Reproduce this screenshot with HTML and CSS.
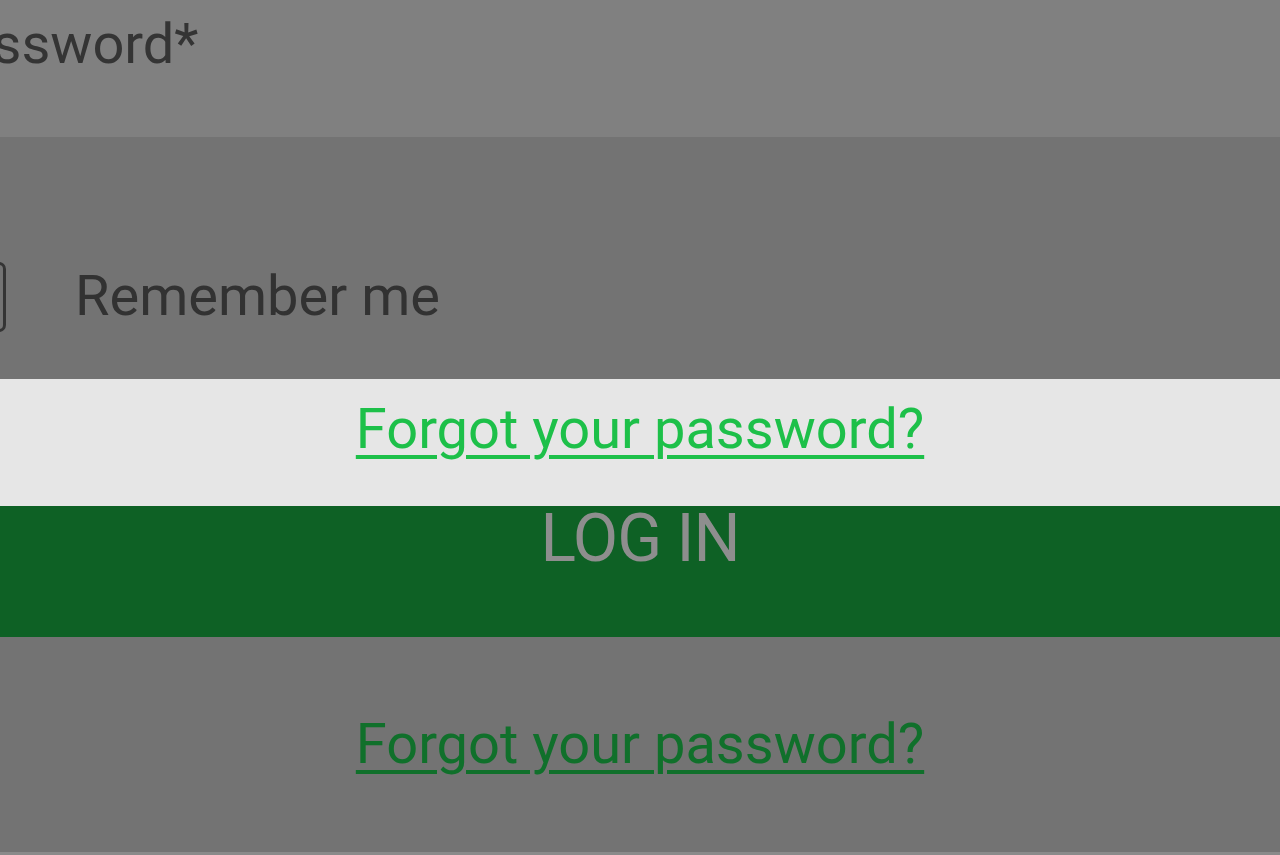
FILE: index.html
```html
<!DOCTYPE html>
<html lang="en">
<head>
<meta charset="utf-8">
<title>Log in</title>
<link rel="stylesheet" href="styles.css">
</head>
<body>
<div class="page">
  <div class="field-row">
    <span class="field-label">Password*</span>
  </div>
  <div class="remember-row">
    <span class="checkbox"></span>
    <span class="remember-label">Remember me</span>
  </div>
  <div class="highlight-row">
    <a class="link link-bright" href="#">Forgot your password?</a>
  </div>
  <div class="login-btn">LOG IN</div>
  <div class="below-row">
    <a class="link link-dim" href="#">Forgot your password?</a>
  </div>
  <div class="bottom-line"></div>
</div>
</body>
</html>
```

FILE: styles.css
```css
html, body {
  margin: 0;
  padding: 0;
  height: 855px;
  overflow: hidden;
  background: #737373;
  font-family: Roboto, "Liberation Sans", Arial, sans-serif;
}

.page {
  display: flex;
  flex-direction: column;
  width: 1280px;
  height: 855px;
  overflow: hidden;
}

.field-row {
  height: 137px;
  box-sizing: border-box;
  padding-top: 11px;
  background: #808080;
  font-size: 56px;
  line-height: normal;
  color: #343434;
  white-space: nowrap;
}

.field-label {
  display: inline-block;
  margin-left: -73px;
}

.remember-row {
  height: 242px;
  box-sizing: border-box;
  padding-top: 125px;
  display: flex;
  align-items: flex-start;
  gap: 69px;
  background: #737373;
}

.checkbox {
  flex: none;
  width: 64px;
  height: 64px;
  margin-left: -64px;
  border: 3px solid #343434;
  border-radius: 7px;
}

.remember-label {
  font-size: 56px;
  line-height: normal;
  color: #323232;
  margin-top: 1px;
  white-space: nowrap;
}

.highlight-row {
  height: 127px;
  box-sizing: border-box;
  padding-top: 17px;
  background: #e6e6e6;
  text-align: center;
}

.link {
  font-size: 56px;
  line-height: normal;
  text-decoration: underline;
  text-decoration-thickness: 4px;
  text-underline-offset: 7px;
  white-space: nowrap;
}

.link-bright {
  color: #1dc049;
}

.login-btn {
  height: 131px;
  background: #0e6125;
  color: #8e8e8e;
  font-size: 66px;
  line-height: 66px;
  text-align: center;
  letter-spacing: -1px;
}

.below-row {
  height: 215px;
  box-sizing: border-box;
  padding-top: 74px;
  background: #737373;
  text-align: center;
}

.link-dim {
  color: #10702b;
}

.bottom-line {
  height: 3px;
  background: #8a8a8a;
}
```
